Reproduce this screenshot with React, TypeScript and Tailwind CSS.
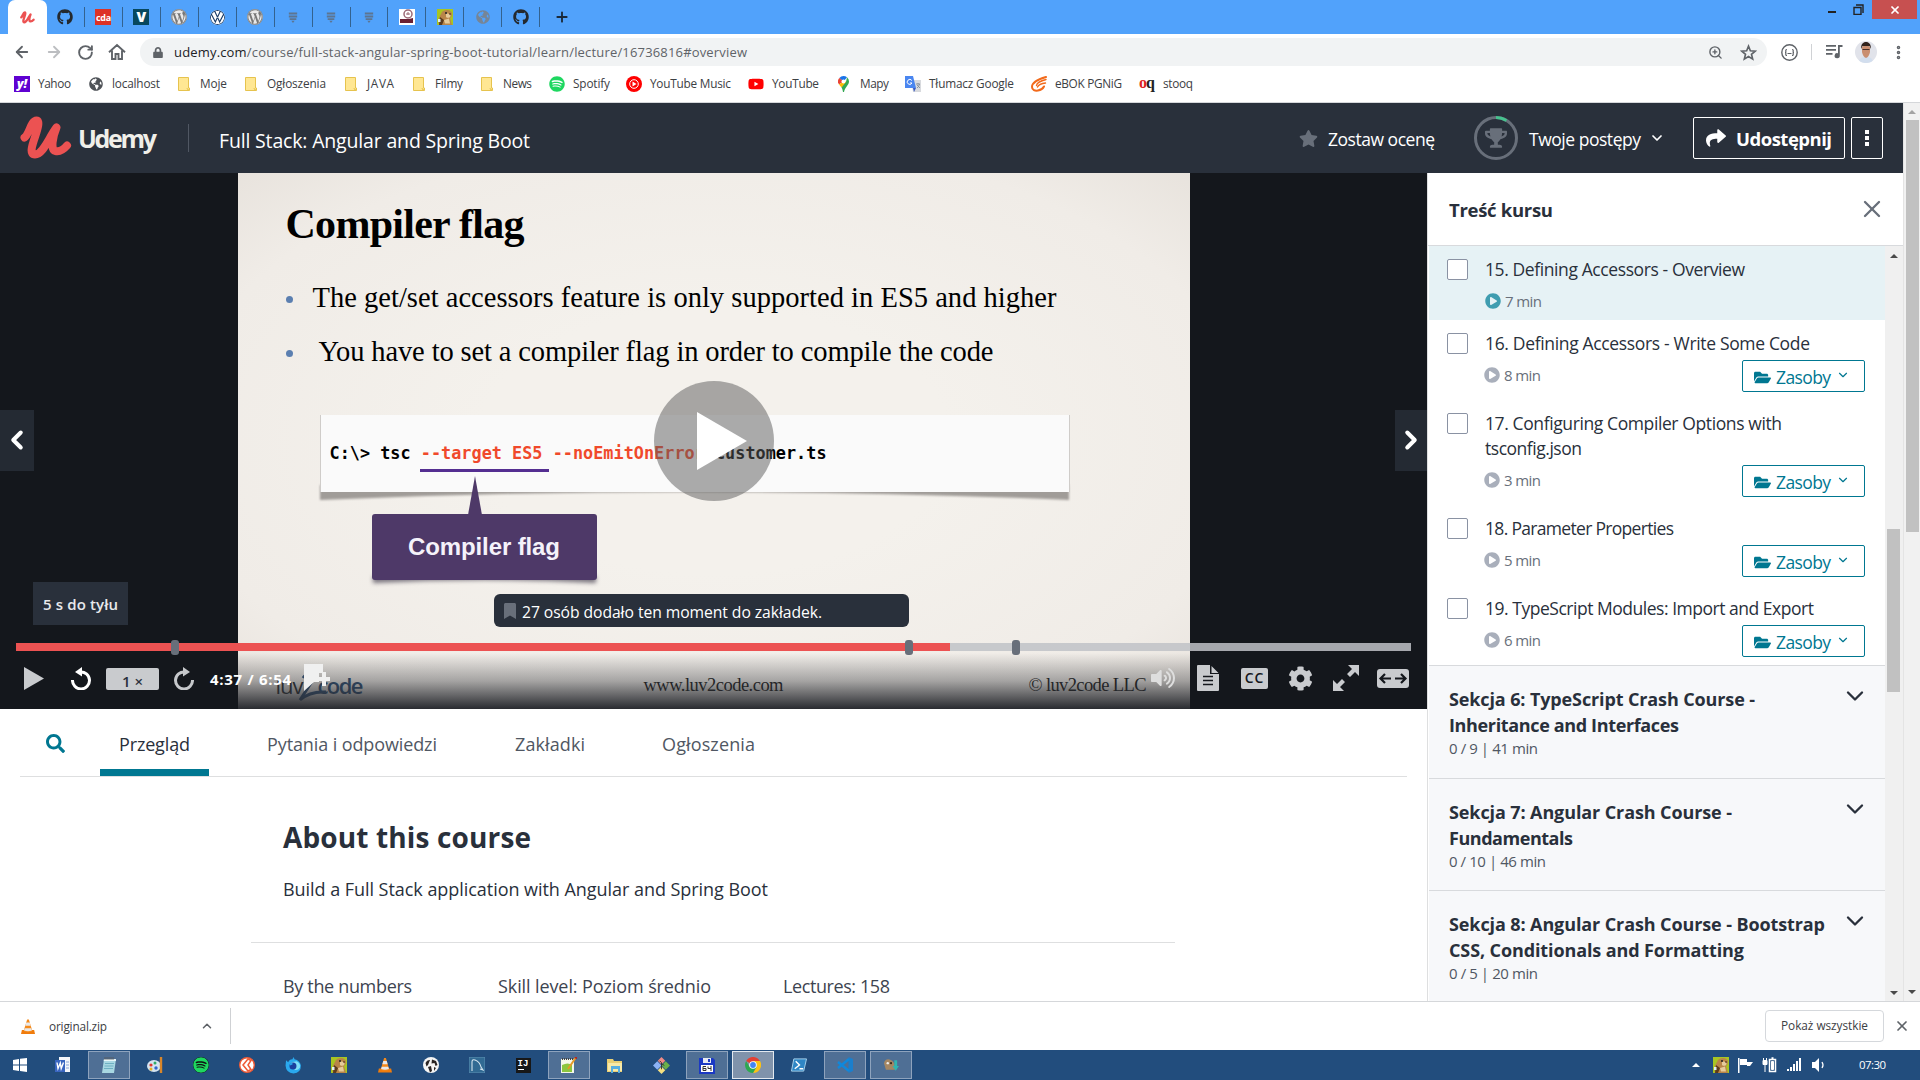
import React, { useLayoutEffect, useRef } from "react";
import {
  FaGithub, FaWordpress, FaSpotify, FaYoutube, FaStar, FaTrophy, FaShare, FaFolderOpen, FaPlayCircle,
  FaSearch, FaLock, FaGlobeAmericas, FaCog, FaVolumeUp, FaFirefox, FaPlay, FaBookmark,
} from "react-icons/fa";
import { SiVolkswagen } from "react-icons/si";
import { ArrowLeft, ArrowRight, RotateCw, Plus, X, ChevronDown, ChevronLeft, ChevronRight, ChevronUp, ZoomIn, ListMusic, EllipsisVertical } from "lucide-react";

/* A single line of text whose letter spacing adapts to fill a given width. */
function Fit({ w, className = "", children }: { w: number; className?: string; children: React.ReactNode }) {
  const ref = useRef<HTMLSpanElement>(null);
  useLayoutEffect(() => {
    const el = ref.current;
    if (!el) return;
    el.style.letterSpacing = "0px";
    const natural = el.getBoundingClientRect().width;
    const count = (el.textContent || "").length;
    el.style.letterSpacing = `${(w - natural) / Math.max(1, count - 1)}px`;
  }, [w]);
  return (
    <span className={`block shrink-0 whitespace-nowrap ${className}`} style={{ width: w }}>
      <span ref={ref} className="inline-block">{children}</span>
    </span>
  );
}

function UdemyMark({ className = "" }: { className?: string }) {
  return (
    <svg viewBox="0 0 52 44" className={className} fill="none" stroke="#ec5252" strokeWidth="8" strokeLinecap="round" strokeLinejoin="round">
      <path d="M4.500 21.500C9 19 11 4.500 16.500 4.500C20 4.500 18 12 15 21C11.500 31 9.500 38.500 15 38.500C23 38.500 28 23 36.500 11.500C33 20 30 34 35.500 35C40 36 44 33 47 29.500" />
    </svg>
  );
}

function Cone({ className = "" }: { className?: string }) {
  return (
    <svg viewBox="0 0 16 18" className={className}>
      <path d="M1 13h14l1 4.500H0z" fill="#f07c0c" />
      <path d="M7 1h2l4 13.500q-5 2-10 0z" fill="#f58a1a" />
      <path d="M6 4.500h4l1 3.500H5zM4.300 11h7.400l.8 2.700q-4.500 1.500-9 0z" fill="#e9e9e9" />
    </svg>
  );
}

function Marmot({ className = "" }: { className?: string }) {
  return (
    <svg viewBox="0 0 16 16" className={className}>
      <path fill="#a8c522" d="M0 0h16v16H0z" />
      <path fill="#b98548" d="M2 16c-1-5 0-8 2-11 1-3 3-4 6-4s5 2 5 4-1 3-2 4l2 7z" />
      <path fill="#e6cb9a" d="M9 5c2-1 5 0 4.500 2s-3 2.500-4.500 1zM7 11l5-1.500 1 5H8z" />
      <circle cx="9" cy="4" r="1" fill="#222" />
      <circle cx="13" cy="5" r=".8" fill="#3a2414" />
      <path fill="#5b3b1c" d="M3 8l4 3-2 5H2z" />
      <path fill="#dff1f4" d="M1 10h2.500v3H1z" />
    </svg>
  );
}

function Badge() {
  return (
    <svg viewBox="0 0 12 14" className="h-[13px] w-[10px]" fill="#5d7591">
      <path d="M1 1h10v2.500H1zM1 4.500h10V7H1zM2 8h8v2H2zM4 11h4l-2 2.500z" />
    </svg>
  );
}

const tabs: React.ReactNode[] = [
  <FaGithub className="size-4 text-[#24292e]" />,
  <span className="flex size-4 items-center justify-center bg-[#dd3226] text-[9px] leading-none font-bold tracking-[-0.3px] text-white">cda</span>,
  <span className="flex size-4 items-center justify-center bg-[#07485f] text-[14px] leading-none font-extrabold text-white">V</span>,
  <FaWordpress className="size-4 rounded-full bg-[#777] text-[#e9e9e9]" />,
  <SiVolkswagen className="size-[15px] rounded-full bg-white text-[#183c68]" />,
  <FaWordpress className="size-4 rounded-full bg-[#777] text-[#e9e9e9]" />,
  <Badge />,
  <Badge />,
  <Badge />,
  <svg viewBox="0 0 16 16" className="size-4">
    <path fill="#fff" d="M0 0h16v16H0z" />
    <circle cx="9" cy="5" r="4" fill="none" stroke="#9b6875" strokeWidth="1.500" />
    <path d="M7 5h4M9 3v3" stroke="#9b6875" />
    <path fill="#6a2033" d="M1 10h9l4-1v5H1z" />
  </svg>,
  <Marmot className="size-4" />,
  <FaGlobeAmericas className="size-[14px] text-[#768596]" />,
  <FaGithub className="size-4 text-[#24292e]" />,
];

function TabStrip() {
  return (
    <div className="flex h-[34px] bg-[#51a2fb]">
      <div className="ml-2 flex w-[39px] items-center justify-center rounded-t-[7px] bg-white">
        <UdemyMark className="h-[13px] w-[15px]" />
      </div>
      {tabs.map((icon, i) => (
        <div key={i} className="flex h-[34px] w-[37.95px] items-center">
          <div className="flex flex-1 items-center justify-center">{icon}</div>
          <div className="h-5 w-px bg-[#33628f]" />
        </div>
      ))}
      <Plus className="mt-[9px] ml-[14px] size-4 text-[#1b2a3a]" strokeWidth={2.8} />
      <div className="ml-auto flex h-[19px] items-start pr-[3px] text-[#1c1f24]">
        <div className="mt-[11px] h-[2px] w-2 bg-[#222]" />
        <svg viewBox="0 0 11 11" className="mt-1 ml-[17px] size-[11px]" fill="none" stroke="#222" strokeWidth="1.400">
          <path d="M1 3.500h7v7H1zM3 1h7v8" />
        </svg>
        <div className="ml-[8px] flex h-[19px] w-[45px] items-center justify-center bg-[#c75050] text-white">
          <X className="size-3" strokeWidth={3.5} />
        </div>
      </div>
    </div>
  );
}

function Toolbar() {
  return (
    <div className="flex h-8 items-center pt-1 text-[#5f6368]">
      <div className="flex w-[140px] shrink-0 items-center gap-[14px] pl-[13px]">
        <ArrowLeft className="size-[18px]" strokeWidth={2.4} />
        <ArrowRight className="size-[18px] text-[#bcbec1]" strokeWidth={2.4} />
        <RotateCw className="size-[17px]" strokeWidth={2.7} />
        <svg viewBox="0 0 18 18" className="size-[18px]" fill="none" stroke="currentColor" strokeWidth="1.900">
          <path d="M1 9.300L9 2l8 7.300M4 7.500V16h3.500v-5h3v5H14V7.500" />
        </svg>
      </div>
      <div className="flex h-7 w-[1627px] items-center rounded-full bg-[#f1f3f4]">
        <FaLock className="ml-[13px] h-[11px] w-[10px]" />
        <Fit w={573} className="ml-[11px] text-[13px] leading-[28px]">
          <span className="text-[#202124]">udemy.com</span>/course/full-stack-angular-spring-boot-tutorial/learn/lecture/16736816#overview
        </Fit>
        <ZoomIn className="ml-auto size-[15px]" strokeWidth={2.2} />
        <svg viewBox="0 0 24 24" className="mr-[10px] ml-[17px] size-[17px]" fill="none" stroke="currentColor" strokeWidth="2.300">
          <path d="M12 3l2.600 6.500 6.900.5-5.300 4.500 1.700 6.800L12 17.600l-5.900 3.700 1.700-6.800L2.500 10l6.900-.5z" />
        </svg>
      </div>
      <svg viewBox="0 0 17 17" className="ml-[14px] size-[17px]" fill="none" stroke="#5f6368" strokeWidth="1.200">
        <circle cx="8.500" cy="8.500" r="7.700" strokeWidth="1.400" />
        <path d="M6 5.500q-1.500 0-1.200 1.500T4 8.500q1.100 0 .8 1.500T6 11.500M11 5.500q1.500 0 1.200 1.500t.8 1.500q-1.100 0-.8 1.500T11 11.500M6.500 9.500h4" />
      </svg>
      <div className="ml-[13px] h-4 w-px bg-[#d0d2d5]" />
      <svg viewBox="0 0 17 16" className="ml-[14px] h-4 w-[17px]" fill="currentColor">
        <path d="M0 1h10v1.800H0zM0 5h10v1.800H0zM0 9h6.500v1.800H0zM12 1h4.500v2h-2.700v8.500a2.600 2.600 0 1 1-1.800-2.300z" />
      </svg>
      <svg viewBox="0 0 22 22" className="ml-[12px] size-[22px] rounded-full">
        <path fill="#e1e3ea" d="M0 0h22v22H0z" />
        <path fill="#d2deee" d="M4 22c0-5 3-6 7-6s7 1 7 6z" />
        <path fill="#c98e70" d="M7 6q4-4 8 0v5q-1 5-4 6-3-1-4-6z" />
        <path fill="#32241e" d="M6 8c0-5 2-7 5-7s5 2 5 7l-1.500-3h-7z" />
        <path d="M7.500 8.500h7" stroke="#4a302a" />
      </svg>
      <EllipsisVertical className="ml-[13px] size-[17px]" strokeWidth={3} />
    </div>
  );
}

const Folder = () => (
  <svg viewBox="0 0 12 14" className="h-[14px] w-3">
    <path d="M.5.500h10v10.500h1v2.500H.5z" fill="#ffe793" stroke="#e6c34e" />
    <path d="M9 11q0 2 2 2" fill="none" stroke="#e6c34e" />
  </svg>
);

const bookmarks: { icon: React.ReactNode; iw: string; label: string; tw: number }[] = [
  { icon: <span className="flex size-4 items-center justify-center bg-[#5f01d1] text-[12px] leading-none font-extrabold text-white italic">y!</span>, iw: "ml-[14px] w-[24px]", label: "Yahoo", tw: 33 },
  { icon: <FaGlobeAmericas className="size-[14px] text-[#4f5358]" />, iw: "ml-[18px] w-[23px]", label: "localhost", tw: 48 },
  { icon: <Folder />, iw: "ml-[18px] w-[22px]", label: "Moje", tw: 27 },
  { icon: <Folder />, iw: "ml-[18px] w-[22px]", label: "Ogłoszenia", tw: 59 },
  { icon: <Folder />, iw: "ml-[19px] w-[22px]", label: "JAVA", tw: 27 },
  { icon: <Folder />, iw: "ml-[19px] w-[22px]", label: "Filmy", tw: 28 },
  { icon: <Folder />, iw: "ml-[18px] w-[22px]", label: "News", tw: 29 },
  { icon: <FaSpotify className="size-4 text-[#1ed760]" />, iw: "ml-[17px] w-[24px]", label: "Spotify", tw: 37 },
  {
    icon: (
      <svg viewBox="0 0 16 16" className="size-4">
        <circle cx="8" cy="8" r="8" fill="#f00" />
        <circle cx="8" cy="8" r="4.300" fill="none" stroke="#fff" />
        <path d="M6.500 5.500l4 2.500-4 2.500z" fill="#fff" />
      </svg>
    ), iw: "ml-[16px] w-[24px]", label: "YouTube Music", tw: 81,
  },
  { icon: <FaYoutube className="size-4 text-[#f00]" />, iw: "ml-[17px] w-[24px]", label: "YouTube", tw: 47 },
  {
    icon: (
      <svg viewBox="0 0 11 16" className="h-4 w-[11px]">
        <path d="M5.500 0A5.500 5.500 0 0 0 1.300 2L5.500 5.500 9 1.300A5.500 5.500 0 0 0 5.500 0z" fill="#1a73e8" />
        <path d="M1.300 2A5.500 5.500 0 0 0 1 8.600L5.500 5.500z" fill="#ea4335" />
        <path d="M1 8.600L3.500 11.500 11 5.500 5.500 5.500z" fill="#fbbc04" />
        <path d="M9 1.300Q11 3 11 5.500C11 9 7 11 6 16H5C4.700 14 4.300 12.800 3.500 11.500L8 6z" fill="#34a853" />
        <circle cx="5.500" cy="5.500" r="2" fill="#fff" />
      </svg>
    ), iw: "ml-[19px] w-[22px]", label: "Mapy", tw: 29,
  },
  {
    icon: (
      <svg viewBox="0 0 16 16" className="size-4">
        <path fill="#d8dade" d="M6 4h10v12H8z" />
        <path fill="#4a86f0" d="M0 0h8l3 12H0z" />
        <path fill="#3a5bc0" d="M8 12h3l-2 4z" />
        <path d="M6.800 4.500A2.500 2.500 0 1 0 7 7H5" fill="none" stroke="#fff" />
        <path d="M11 8h4M13 7v1M12 12q2-1 2.500-4M12 9l3 3" stroke="#7b8794" fill="none" strokeWidth=".8" />
      </svg>
    ), iw: "ml-[16px] w-[24px]", label: "Tłumacz Google", tw: 85,
  },
  {
    icon: (
      <svg viewBox="0 0 16 16" className="size-4" fill="none" stroke="#f26a1b" strokeLinecap="round">
        <path d="M15 1C8 3 1 6 1 11c0 3 3 4 6 3.500 3-.5 5-2 6-4" strokeWidth="2" />
        <path d="M15 3.500c-4 1-9 3-9.500 6M14.500 7c-4 .5-7 2-8 4" strokeWidth="1.400" />
      </svg>
    ), iw: "ml-[17px] w-[24px]", label: "eBOK PGNiG", tw: 67,
  },
  { icon: <span className="block font-['Liberation_Serif',serif] text-[16px] leading-[14px] font-bold tracking-[-1px] text-[#222]"><span className="text-[#d22]">o</span>q</span>, iw: "ml-[17px] w-[24px] pb-[2px]", label: "stooq", tw: 30 },
];

function Bookmarks() {
  return (
    <div className="flex h-[37px] items-center border-b border-[#d5d7da] text-[11.8px] text-[#3c4043]">
      {bookmarks.map((b) => (
        <div key={b.label} className="flex items-center">
          <div className={`${b.iw} shrink-0`}>{b.icon}</div>
          <Fit w={b.tw}>{b.label}</Fit>
        </div>
      ))}
    </div>
  );
}

function CourseHeader() {
  return (
    <header className="flex h-[70px] items-center bg-[#29303b] text-white">
      <UdemyMark className="ml-5 h-[44px] w-[52px]" />
      <Fit w={79} className="ml-[6px] text-[25px] leading-none font-bold text-[#f0efe9]">Udemy</Fit>
      <div className="ml-[31px] h-7 w-px bg-[#505763]" />
      <Fit w={311} className="ml-[30px] pt-[6px] text-[19.5px]">Full Stack: Angular and Spring Boot</Fit>
      <div className="ml-auto flex items-center pr-5">
        <FaStar className="size-[19px] text-[#686f7a]" />
        <Fit w={107} className="ml-[10px] pt-[2px] text-[17.5px]">Zostaw ocenę</Fit>
        <div className="relative ml-[39px] flex size-[44px] items-center justify-center">
          <svg viewBox="0 0 44 44" className="absolute inset-0 size-[44px]" fill="none" strokeWidth="3">
            <circle cx="22" cy="22" r="20.500" stroke="#686f7a" />
            <path d="M22 1.500A20.500 20.500 0 0 1 32.500 4.500" stroke="#46c28e" />
          </svg>
          <FaTrophy className="size-[22px] text-[#686f7a]" />
        </div>
        <Fit w={112} className="ml-[11px] pt-[3px] text-[17.5px]">Twoje postępy</Fit>
        <ChevronDown className="ml-[8px] size-4" strokeWidth={2.6} />
        <div className="ml-[28px] flex h-[42px] w-[152px] items-center rounded-[2px] border border-white">
          <FaShare className="ml-[12px] size-5" />
          <Fit w={96} className="ml-[10px] pt-px text-[18.5px] font-bold">Udostępnij</Fit>
        </div>
        <div className="ml-[6px] flex h-[42px] w-8 flex-col items-center justify-center gap-[2px] rounded-[2px] border border-white">
          <div className="size-1 bg-white" />
          <div className="size-1 bg-white" />
          <div className="size-1 bg-white" />
        </div>
      </div>
    </header>
  );
}

function Slide() {
  return (
    <div className="relative h-full w-[952px] overflow-hidden bg-[radial-gradient(ellipse_at_center,#f4f1ec_35%,#f0ece7_80%,#e8e3dd_100%)] text-black">
      <div className="pt-[26px] pl-[48px]">
        <Fit w={239} className="font-['Liberation_Serif',serif] text-[42px] leading-[50px] font-bold">Compiler flag</Fit>
        <div className="mt-[29px] flex items-center font-['Liberation_Serif',serif] text-[28.5px] leading-10">
          <span className="mt-[2px] size-[7px] rounded-full bg-[#5b7fb0]" />
          <Fit w={744} className="ml-[20px]">The get/set accessors feature is only supported in ES5 and higher</Fit>
        </div>
        <div className="mt-[14px] flex items-center font-['Liberation_Serif',serif] text-[28.5px] leading-10">
          <span className="mt-[2px] size-[7px] rounded-full bg-[#5b7fb0]" />
          <Fit w={675} className="ml-[26px]">You have to set a compiler flag in order to compile the code</Fit>
        </div>
        <div className="relative mt-[43px] ml-[34px] h-[77px] w-[750px]">
          <svg viewBox="0 0 749 90" className="absolute top-0 left-0 h-[90px] w-[749px] blur-[1px]">
            <path d="M-1 70H749V85Q374 69-1 85z" fill="#a09c98" />
          </svg>
          <div className="relative h-[77px] border-x border-[#cfccc9] bg-[#fafafa] pt-[25px] pl-[9px] font-['DejaVu_Sans_Mono',monospace] text-[16.8px] leading-[26px] font-bold">
            <Fit w={497}>{"C:\\> tsc "}<span className="text-[#f0492b]">--target ES5 --noEmitOnError</span>{" Customer.ts"}</Fit>
          </div>
          <div className="absolute top-[54px] left-[100px] h-[3px] w-[129px] bg-[#542e91]" />
        </div>
      </div>
      <div className="absolute top-[303px] left-[134px] w-[225px]">
        <svg viewBox="0 0 225 112" className="absolute top-0 left-0 h-[112px] w-[225px] overflow-visible">
          <path d="M1 100H224V107Q112 101 1 107z" fill="#77727c" className="blur-[2px]" />
          <path d="M103 0L110 39H96z" fill="#4e3968" />
        </svg>
        <div className="relative mt-[38px] flex h-[66px] items-center justify-center rounded-[3px] bg-[#4e3968] font-['Liberation_Sans',sans-serif] text-[24px] font-bold text-[#f5f2fa]">
          <Fit w={152}>Compiler flag</Fit>
        </div>
      </div>
      <div className="absolute bottom-[6px] left-[38px] h-8 w-[88px]">
        <svg viewBox="0 0 88 32" className="absolute inset-0 h-8 w-[88px] overflow-visible" fill="none" stroke="#2d5078" strokeWidth="3">
          <path d="M27 7c5-7 12-3 8 5l-11 17q10-9 26-8" />
        </svg>
        <div className="flex justify-between font-['Open_Sans',sans-serif] text-[22px] leading-7">
          <Fit w={28} className="text-[#26282b]">luv</Fit>
          <Fit w={46} className="font-semibold text-[#28496f]">code</Fit>
        </div>
      </div>
      <div className="absolute right-[43px] bottom-[11px] left-[406px] flex justify-between font-['Liberation_Serif',serif] text-[18.5px] leading-[26px] text-[#161616]">
        <Fit w={140}>www.luv2code.com</Fit>
        <Fit w={118}>© luv2code LLC</Fit>
      </div>
      <div className="absolute inset-x-0 bottom-0 h-[56px] bg-gradient-to-b from-transparent via-[#33353a66] to-[#292b30]" />
    </div>
  );
}

function Replay({ flip }: { flip?: boolean }) {
  return (
    <svg viewBox="0 0 20 23" className={flip ? "h-[23px] w-5 -scale-x-100 text-[#c6c8cb]" : "h-[23px] w-5 text-white"} fill="none" stroke="currentColor" strokeWidth="3">
      <path d="M1.500 13A8.500 8.500 0 1 0 9 5" />
      <path d="M11 0v9.500L4 5z" fill="currentColor" stroke="none" />
    </svg>
  );
}

function PlayerControls() {
  return (
    <div className="flex h-[60px] items-center pb-[2px] pl-6 text-[#c9cbce]">
      <svg viewBox="0 0 20 23" className="h-[23px] w-5"><path d="M0 0l20 11.500L0 23z" fill="currentColor" /></svg>
      <div className="ml-[27px]"><Replay /></div>
      <div className="mt-[2px] ml-[15px] flex h-[22px] w-[53px] items-center justify-center gap-1 rounded-[2px] bg-[#c9cbce] pt-1 text-[15px] leading-none font-semibold text-[#2a303b]">
        1<span className="text-[15px]">×</span>
      </div>
      <div className="ml-[15px]"><Replay flip /></div>
      <Fit w={81} className="ml-4 pt-[3px] text-[15px] font-bold text-white">4:37 / 6:54</Fit>
      <svg viewBox="0 0 28 28" className="ml-3 size-7" fill="#f0f0f0">
        <path d="M1 0h19v9h-4v9l-5 0-10 9z" />
        <path d="M19 8h4v5h4v4h-4v5h-4v-5h-4v-4h4z" />
      </svg>
      <FaVolumeUp className="ml-auto size-6 text-[#dedede]" />
      <svg viewBox="0 0 22 26" className="ml-[22px] h-[26px] w-[22px]">
        <path d="M1 0h12v9h9v16q0 1-1 1H1q-1 0-1-1V1q0-1 1-1zM14.500 1l7 7h-7z" fill="#c9cbce" />
        <path d="M6 11.500h10M6 15.500h10M6 19.500h10" stroke="#14171c" strokeWidth="1.500" />
      </svg>
      <div className="ml-[22px] flex h-[21px] w-[27px] items-center justify-center rounded-[2px] bg-[#c9cbce] text-[14px] leading-none font-semibold tracking-[1px] text-[#14171c]">CC</div>
      <FaCog className="ml-[20px] size-[25px]" />
      <svg viewBox="0 0 26 26" className="ml-[20px] size-[26px]" fill="currentColor">
        <path d="M15 0h11v11l-4-4-5 5-3-3 5-5zM11 26H0V15l4 4 5-5 3 3-5 5z" />
      </svg>
      <svg viewBox="0 0 32 19" className="mr-[18px] ml-[18px] h-[19px] w-8">
        <rect width="32" height="19" rx="3" fill="#c9cbce" />
        <path d="M14 9.500H4M8 5L3.500 9.500 8 14M18 9.500h10M24 5l4.500 4.500L24 14" fill="none" stroke="#14171c" strokeWidth="2.200" />
      </svg>
    </div>
  );
}

function Player() {
  return (
    <div className="relative flex h-[536px] justify-center bg-[#14171c]">
      <Slide />
      <div className="absolute top-[237px] left-0 flex h-[61px] w-[34px] items-center justify-center bg-[#242a33] pb-[2px] text-white">
        <ChevronLeft className="size-[30px]" strokeWidth={3.2} />
      </div>
      <div className="absolute top-[237px] right-0 flex h-[61px] w-8 items-center justify-center bg-[#242a33] pb-[2px] text-white">
        <ChevronRight className="size-[30px]" strokeWidth={3.2} />
      </div>
      <div className="absolute top-[208px] left-[654px] flex size-[120px] items-center justify-center rounded-full bg-[#5a5a5a]/50">
        <svg viewBox="0 0 50 58" className="ml-[16px] h-[58px] w-[50px]"><path d="M0 0L50 29 0 58z" fill="#fff" /></svg>
      </div>
      <div className="absolute top-[409px] left-[33px] flex h-[43px] w-[95px] items-center justify-center bg-[#29303b] text-[15px] font-semibold text-[#e8e9eb]">
        <Fit w={75} className="pt-[2px]">5 s do tyłu</Fit>
      </div>
      <div className="absolute top-[421px] left-[494px] flex h-[33px] w-[415px] items-center rounded-[6px] bg-[#29303b] text-[15.7px] text-white">
        <FaBookmark className="ml-[9px] h-4 w-[14px] text-[#686f7a]" />
        <Fit w={300} className="ml-[5px] pt-1 font-medium">27 osób dodało ten moment do zakładek.</Fit>
      </div>
      <div className="absolute inset-x-0 bottom-0">
        <div className="relative mx-4 -mb-[2px] h-2 bg-[#bfc2c7]/85">
          <div className="h-2 w-[934px] bg-[#ec5252]" />
          <div className="absolute top-[-3px] left-[155px] h-[15px] w-2 rounded-[3px] bg-[#686f7a]" />
          <div className="absolute top-[-3px] left-[889px] h-[15px] w-2 rounded-[3px] bg-[#686f7a]" />
          <div className="absolute top-[-3px] left-[996px] h-[15px] w-2 rounded-[3px] bg-[#686f7a]" />
        </div>
        <PlayerControls />
      </div>
    </div>
  );
}

function Overview() {
  return (
    <div className="flex-1 overflow-hidden bg-white text-[#505763]">
      <div className="ml-5 flex h-[68px] w-[1387px] border-b border-[#dedfe0] text-[18px] leading-[70px]">
        <FaSearch className="mt-[25px] ml-[26px] size-[19px] text-[#007791]" />
        <div className="ml-[35px] flex h-[67px] w-[109px] justify-center border-b-[7px] border-[#007791] text-[#29303b]">
          <Fit w={71}>Przegląd</Fit>
        </div>
        <Fit w={170} className="ml-[58px]">Pytania i odpowiedzi</Fit>
        <Fit w={70} className="ml-[78px]">Zakładki</Fit>
        <Fit w={93} className="ml-[77px]">Ogłoszenia</Fit>
      </div>
      <Fit w={248} className="mt-[39px] ml-[283px] text-[28px] leading-[42px] font-bold text-[#29303b]">About this course</Fit>
      <Fit w={485} className="mt-[18px] ml-[283px] text-[18px] leading-[26px] text-[#29303b]">Build a Full Stack application with Angular and Spring Boot</Fit>
      <div className="mt-[40px] ml-[251px] h-px w-[924px] bg-[#dedfe0]" />
      <div className="mt-[30px] ml-[283px] flex text-[18px] leading-[26px] text-[#3d4450]">
        <Fit w={129}>By the numbers</Fit>
        <Fit w={213} className="ml-[86px]">Skill level: Poziom średnio</Fit>
        <Fit w={107} className="ml-[72px]">Lectures: 158</Fit>
      </div>
    </div>
  );
}

const lectures: { lines: [string, number][]; min: string; active?: boolean }[] = [
  { lines: [["15. Defining Accessors - Overview", 260]], min: "7 min", active: true },
  { lines: [["16. Defining Accessors - Write Some Code", 325]], min: "8 min" },
  { lines: [["17. Configuring Compiler Options with", 297], ["tsconfig.json", 97]], min: "3 min" },
  { lines: [["18. Parameter Properties", 189]], min: "5 min" },
  { lines: [["19. TypeScript Modules: Import and Export", 329]], min: "6 min" },
];

const sections: { lines: [string, number][]; meta: string; mw: number }[] = [
  { lines: [["Sekcja 6: TypeScript Crash Course -", 306], ["Inheritance and Interfaces", 230]], meta: "0 / 9 | 41 min", mw: 89 },
  { lines: [["Sekcja 7: Angular Crash Course -", 283], ["Fundamentals", 124]], meta: "0 / 10 | 46 min", mw: 97 },
  { lines: [["Sekcja 8: Angular Crash Course - Bootstrap", 376], ["CSS, Conditionals and Formatting", 295]], meta: "0 / 5 | 20 min", mw: 89 },
];

function Sidebar() {
  return (
    <aside className="flex w-[476px] flex-col border-l border-[#dedfe0] bg-white">
      <div className="flex h-[73px] shrink-0 items-center justify-between border-b border-[#d8dadd] pr-[17px] pl-[21px]">
        <Fit w={104} className="pt-[2px] text-[18.5px] font-bold text-[#29303b]">Treść kursu</Fit>
        <X className="size-[28px] text-[#686f7a]" strokeWidth={2} />
      </div>
      <div className="flex min-h-0 flex-1">
        <div className="ml-px w-[456px] overflow-hidden">
          {lectures.map((l) => (
            <div key={l.min} className={l.active ? "flex h-[74px] bg-[#e6f2f5] pt-[13px] pl-[18px]" : l.lines.length > 1 ? "flex h-[105px] pt-[13px] pl-[18px]" : "flex h-20 pt-[13px] pl-[18px]"}>
              <div className="size-[21px] shrink-0 rounded-[2px] border border-[#8a92a3] bg-white" />
              <div className="ml-[17px] flex-1">
                <div className="-mt-[2px] text-[17.5px] leading-[25px] text-[#29303b]">
                  {l.lines.map(([t, w]) => <Fit key={t} w={w}>{t}</Fit>)}
                </div>
                <div className="flex pr-5">
                  <div className="flex h-[38px] items-center text-[15px] text-[#686f7a]">
                    <FaPlayCircle className={l.active ? "size-4 text-[#3f9db0]" : "-ml-px size-4 text-[#a9afbb]"} />
                    <Fit w={37} className="ml-[4px]">{l.min}</Fit>
                  </div>
                  {!l.active && (
                    <div className="mt-1 ml-auto flex h-8 w-[123px] items-center rounded-[2px] border border-[#007791] text-[#007791]">
                      <FaFolderOpen className="mt-[3px] ml-[11px] size-[17px]" />
                      <Fit w={55} className="mt-[3px] ml-[5px] text-[17.5px]">Zasoby</Fit>
                      <ChevronDown className="mb-[2px] ml-[5px] size-[14px]" strokeWidth={2} />
                    </div>
                  )}
                </div>
              </div>
            </div>
          ))}
          {sections.map((s) => (
            <div key={s.meta} className="flex h-[112.5px] items-start justify-between border-t border-[#d8dadd] bg-[#f7f8fa] pt-[20px] pr-[16px] pl-5">
              <div>
                <div className="text-[18px] leading-[26px] font-bold text-[#29303b]">
                  {s.lines.map(([t, w]) => <Fit key={t} w={w}>{t}</Fit>)}
                </div>
                <Fit w={s.mw} className="text-[15px] leading-[20px] text-[#505763]">{s.meta}</Fit>
              </div>
              <ChevronDown className="-mt-[4px] size-[28px]" color="#29303b" strokeWidth={2} />
            </div>
          ))}
        </div>
        <div className="flex w-[18px] flex-col items-center bg-[#f0f0f0]">
          <div className="mt-2 h-0 w-0 border-x-4 border-b-4 border-x-transparent border-b-[#4a4a4a]" />
          <div className="mt-[271px] mr-[2px] h-[163px] w-[13px] bg-[#c1c1c1]" />
          <div className="mt-auto mb-[6px] h-0 w-0 border-x-4 border-t-4 border-x-transparent border-t-[#4a4a4a]" />
        </div>
      </div>
    </aside>
  );
}

const Pinned = ({ children }: { children: React.ReactNode }) => (
  <div className="flex w-[46px] justify-center"><div className="flex h-7 w-[42px] items-center justify-center">{children}</div></div>
);
const Running = ({ children, focused }: { children: React.ReactNode; focused?: boolean }) => (
  <div className="flex w-[46px] justify-center">
    <div className={focused ? "flex h-7 w-[42px] items-center justify-center border border-[#e3e9ef] bg-[#8093ab]" : "flex h-7 w-[42px] items-center justify-center border border-[#8ea3bd] bg-[#4f6f95]"}>{children}</div>
  </div>
);

function Taskbar() {
  return (
    <div className="flex h-[30px] items-center bg-[#224d7d] text-white">
      <svg viewBox="0 0 14 14" className="ml-[13px] size-[14px]" fill="#fff"><path d="M0 2l6-1v5.500H0zM7 .8L14 0v6.500H7zM0 7.500h6V13l-6-1zM7 7.500h7V14l-7-1z" /></svg>
      <div className="ml-[13px] flex">
        <Pinned>
          <svg viewBox="0 0 16 16" className="size-4"><path fill="#f3f6fb" d="M4 0h11v15H4z" /><path fill="#3a66c0" d="M0 3h10v12H0z" /><path d="M2 5.500l1 6L5.300 6l.9 5.500L8.500 5.500" stroke="#fff" strokeWidth="1.400" fill="none" /><path d="M11 5h3M11 8h3M11 11h3" stroke="#8aa5d6" /></svg>
        </Pinned>
        <Running>
          <svg viewBox="0 0 16 17" className="h-[17px] w-4"><path fill="#a8d7e2" d="M3 2h12l-2 14H1z" /><path fill="#e8f6f8" d="M3 2h12v2H2.700z" /><path d="M4 0v3M6 0v3M8 0v3M10 0v3M12 0v3" stroke="#555" strokeWidth=".8" /><path d="M4 6.500h9M3.500 9h9M3 11.500h9" stroke="#6eb0c2" /></svg>
        </Running>
        <Pinned>
          <svg viewBox="0 0 17 16" className="h-4 w-[17px]"><ellipse cx="7" cy="9" rx="7" ry="6" fill="#d5e4f0" /><circle cx="4" cy="8" r="1.600" fill="#d33" /><circle cx="8" cy="6" r="1.500" fill="#3a6" /><circle cx="4" cy="12" r="1.500" fill="#e8b020" /><circle cx="9" cy="11" r="1.700" fill="#36c" /><path d="M14 0v16" stroke="#d8862a" strokeWidth="2.400" /></svg>
        </Pinned>
        <Pinned><FaSpotify className="size-4 rounded-full bg-[#111] text-[#1ed760]" /></Pinned>
        <Pinned>
          <svg viewBox="0 0 16 16" className="size-4"><circle cx="8" cy="8" r="7.300" fill="#fff" stroke="#ef5a35" strokeWidth="1.400" /><path d="M12 3.500L9 2 4 8l5 6 3-1.500L9 8z" fill="none" stroke="#ef5a35" strokeWidth="1.500" /></svg>
        </Pinned>
        <Pinned>
          <svg viewBox="0 0 16 16" className="size-[17px]"><path d="M1 3l2 2q1-3 4-3l1-2 1 2q5 1 6 6 0 7-7 7.500Q1 15 .5 8z" fill="#2aa9ee" /><path d="M6 5l5-1q4 2 3 6-2 3-5 2z" fill="#7fdcf7" /><circle cx="7.500" cy="8.500" r="3.300" fill="#1b3f9e" /><path d="M4.500 6q2-1 3 .5L5 8z" fill="#2aa9ee" /></svg>
        </Pinned>
        <Pinned><Marmot className="size-4" /></Pinned>
        <Pinned><Cone className="h-4 w-[14px]" /></Pinned>
        <Pinned>
          <svg viewBox="0 0 16 16" className="size-4"><circle cx="8" cy="8" r="8" fill="#f5f5f5" /><path d="M2.500 6Q4 2.500 7 3l-2 5-1.500 1.500zM9 2.500l4 1.500 1.500 4-2 1-1-3-3 .5zM5 10l3-1 1 5-2 1.500zM11 10l2 1-2 3z" fill="#2a2423" /></svg>
        </Pinned>
        <Pinned>
          <svg viewBox="0 0 16 16" className="size-4"><rect width="16" height="16" rx="1" fill="#316a93" stroke="#5c8fb2" /><path d="M3 14V5q0-3 3-2 5 2 6 7l2 3-3-1" fill="none" stroke="#d3e4ef" strokeWidth="1.100" /></svg>
        </Pinned>
        <Pinned>
          <div className="flex size-[15px] flex-col bg-[#171717] pt-[2px] pl-[2px] font-['Liberation_Mono',monospace] text-[9px] leading-[8px] font-bold">IJ<span className="mt-[1px] h-px w-[6px] bg-white" /></div>
        </Pinned>
        <Running>
          <svg viewBox="0 0 16 17" className="h-[17px] w-4"><path fill="#f4f7ea" d="M0 2h13v14H0z" /><path fill="#8cc63f" d="M1 8q6-3 10 0v7H1z" /><path d="M1 2h11" stroke="#444" strokeWidth="2" strokeDasharray="1 1" /><path d="M14.500 1L7 12" stroke="#e59a28" strokeWidth="2" /><path d="M14 0l2 1.500" stroke="#b32525" strokeWidth="2" /></svg>
        </Running>
        <Pinned>
          <svg viewBox="0 0 16 15" className="h-[15px] w-4"><path fill="#e9cf74" d="M0 1h6l1 2h8v11H0z" /><path fill="#f8e9a8" d="M1 5h14v8H1z" /><path fill="#58aee0" d="M4 8h9v7h-2v-4H6v4H4z" /></svg>
        </Pinned>
        <Pinned>
          <svg viewBox="0 0 18 18" className="size-[17px]"><path fill="#ef8a86" d="M9 0l4 4-4 4-4-4z" /><path fill="#8db3f5" d="M4.500 4.500L9 9l-4.500 4.500L0 9z" /><path fill="#6ab04a" d="M13.500 4.500L18 9l-4.500 4.500L9 9z" /><path fill="#f5e080" d="M9 10l4 4-4 4-4-4z" /><path d="M7 4l2 2v7M9 7l3 2" stroke="#333" fill="none" /></svg>
        </Pinned>
        <Running>
          <svg viewBox="0 0 16 17" className="h-[17px] w-4"><path fill="#1b39c4" d="M0 1h14l2 2v14H0z" /><path fill="#e7eaf2" d="M4 1h8v5H4z" /><path fill="#1b39c4" d="M9 2h2v3H9z" /><path fill="#fff" d="M2 8h12v7H2z" /><path d="M7 9.500H4v4h3v-2H4M9 9.500v2h3M12 9v5" stroke="#333" fill="none" /></svg>
        </Running>
        <Running focused>
          <svg viewBox="0 0 16 16" className="size-4"><path fill="#e34133" d="M8 8L1.100 4A8 8 0 0 1 15 4z" /><path fill="#fbc116" d="M15 4A8 8 0 0 1 8 16l4-8-4-4z" /><path fill="#2da94f" d="M1.100 4A8 8 0 0 0 8 16l3.500-6L4 9z" /><circle cx="8" cy="8" r="3.800" fill="#fff" /><circle cx="8" cy="8" r="2.900" fill="#4285f4" /></svg>
        </Running>
        <Pinned>
          <svg viewBox="0 0 17 14" className="h-[14px] w-[16px]"><path fill="#2f86c5" stroke="#a7d4ef" d="M3 .5h13.500l-3 13H.5z" /><path d="M5 3l4 4-5 4M9 11h4" stroke="#fff" strokeWidth="1.500" fill="none" /></svg>
        </Pinned>
        <Running>
          <svg viewBox="0 0 16 16" className="size-4"><path fill="#1b7fcc" d="M11.500 0L16 2v12l-4.500 2z" /><path d="M12 2L1 11M12 14L1 5" stroke="#0f88dc" strokeWidth="2.500" /></svg>
        </Running>
        <Running>
          <svg viewBox="0 0 16 12" className="h-3 w-[15px]"><path fill="#a58763" d="M0 4q1-5 6-4 4 1 5 5l1 6H2z" /><circle cx="4" cy="4" r="1.300" fill="#eee" /><circle cx="7.500" cy="4" r="1.100" fill="#35261a" /><path fill="#2fb5b0" d="M11 1h3v6h2l-3.500 5L9 7h2z" /></svg>
        </Running>
      </div>
      <div className="ml-auto flex items-center">
        <div className="h-0 w-0 border-x-4 border-b-4 border-x-transparent border-b-white" />
        <Marmot className="ml-[13px] size-4" />
        <svg viewBox="0 0 15 16" className="ml-[9px] h-4 w-[15px]" fill="#fff"><path d="M0 1h1.500v15H0zM2 2h7v6H2zM9 5h6l-3 4H9z" /></svg>
        <svg viewBox="0 0 16 16" className="ml-[9px] size-4" fill="none" stroke="#fff"><path d="M7.500 2.500h6v12h-6zM9.500 1h2" strokeWidth="1.500" /><path fill="#fff" d="M9.500 4.500h2v8h-2zM1 3.500h4v4H1zM1.500 1v2M4.500 1v2M3 7v8" /></svg>
        <svg viewBox="0 0 16 14" className="ml-2 h-[14px] w-4" fill="#fff"><path d="M1 11h2v2H1zM4 9h2v4H4zM7 6h2v7H7zM10 3h2v10h-2zM13 0h2v13h-2z" /></svg>
        <svg viewBox="0 0 14 14" className="ml-[10px] size-[14px]" fill="#fff"><path d="M0 4h3l4-4v14L3 10H0z" /><path d="M10 4q2 3 0 6" fill="none" stroke="#fff" strokeWidth="1.300" /></svg>
        <Fit w={27} className="mr-[34px] ml-[33px] text-[11.5px]">07:30</Fit>
      </div>
    </div>
  );
}

export default function App() {
  return (
    <div className="flex h-[1080px] w-[1920px] flex-col overflow-hidden bg-white font-['Open_Sans',sans-serif]">
      <TabStrip />
      <Toolbar />
      <Bookmarks />
      <div className="flex h-[898px] shrink-0">
        <div className="flex w-[1903px] flex-col">
          <CourseHeader />
          <div className="flex min-h-0 flex-1">
            <main className="flex w-[1427px] flex-col">
              <Player />
              <Overview />
            </main>
            <Sidebar />
          </div>
        </div>
        <div className="flex w-[17px] flex-col items-center border-l border-[#e4e4e4] bg-[#f1f1f1]">
          <div className="mt-[7px] h-0 w-0 border-x-4 border-b-4 border-x-transparent border-b-[#a3a3a3]" />
          <div className="mt-[6px] h-[412px] w-[13px] bg-[#c1c1c1]" />
          <div className="mt-auto mb-[7px] h-0 w-0 border-x-4 border-t-4 border-x-transparent border-t-[#4a4a4a]" />
        </div>
      </div>
      <div className="flex h-[49px] shrink-0 items-center border-t border-[#d5d7da] text-[11.8px] text-[#3c4043]">
        <Cone className="ml-[21px] h-[17px] w-[14px]" />
        <Fit w={58} className="mt-[2px] ml-[14px]">original.zip</Fit>
        <ChevronUp className="ml-[93px] size-[14px] text-[#5f6368]" strokeWidth={2.6} />
        <div className="ml-4 h-9 w-px bg-[#cfd1d4]" />
        <div className="ml-auto flex h-8 w-[119px] items-center justify-center rounded-[4px] border border-[#d5d8dc]">
          <Fit w={87} className="font-medium">Pokaż wszystkie</Fit>
        </div>
        <X className="mr-[10px] ml-[10px] size-4 text-[#5f6368]" strokeWidth={2.6} />
      </div>
      <Taskbar />
    </div>
  );
}
